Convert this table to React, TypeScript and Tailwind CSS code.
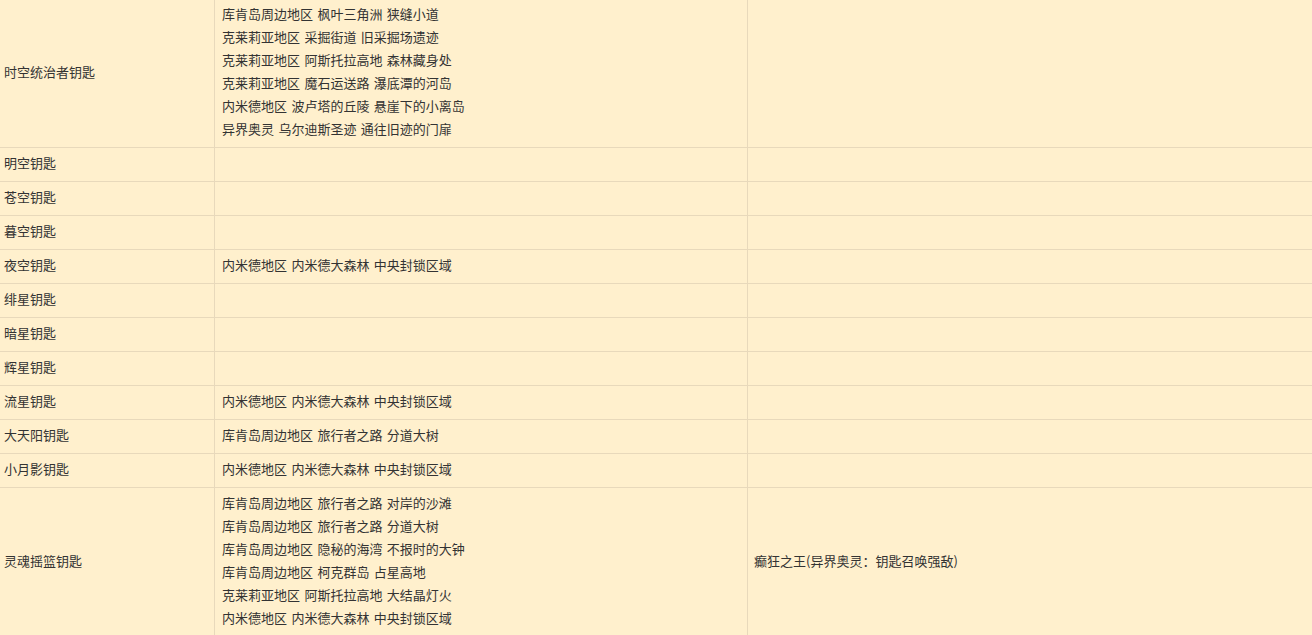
const rows: { name: string; places: string[]; boss?: string }[] = [
  {
    name: "时空统治者钥匙",
    places: [
      "库肯岛周边地区 枫叶三角洲 狭缝小道",
      "克莱莉亚地区 采掘街道 旧采掘场遗迹",
      "克莱莉亚地区 阿斯托拉高地 森林藏身处",
      "克莱莉亚地区 魔石运送路 瀑底潭的河岛",
      "内米德地区 波卢塔的丘陵 悬崖下的小离岛",
      "异界奥灵 乌尔迪斯圣迹 通往旧迹的门扉",
    ],
  },
  { name: "明空钥匙", places: [] },
  { name: "苍空钥匙", places: [] },
  { name: "暮空钥匙", places: [] },
  { name: "夜空钥匙", places: ["内米德地区 内米德大森林 中央封锁区域"] },
  { name: "绯星钥匙", places: [] },
  { name: "暗星钥匙", places: [] },
  { name: "辉星钥匙", places: [] },
  { name: "流星钥匙", places: ["内米德地区 内米德大森林 中央封锁区域"] },
  { name: "大天阳钥匙", places: ["库肯岛周边地区 旅行者之路 分道大树"] },
  { name: "小月影钥匙", places: ["内米德地区 内米德大森林 中央封锁区域"] },
  {
    name: "灵魂摇篮钥匙",
    places: [
      "库肯岛周边地区 旅行者之路 对岸的沙滩",
      "库肯岛周边地区 旅行者之路 分道大树",
      "库肯岛周边地区 隐秘的海湾 不报时的大钟",
      "库肯岛周边地区 柯克群岛 占星高地",
      "克莱莉亚地区 阿斯托拉高地 大结晶灯火",
      "内米德地区 内米德大森林 中央封锁区域",
    ],
    boss: "癫狂之王(异界奥灵：钥匙召唤强敌)",
  },
];

export default function App() {
  return (
    <div
      className="w-[1312px] h-[635px] overflow-hidden bg-[#fff0cd] text-[#333] text-[13px] leading-[23px] [word-spacing:1.5px]"
      style={{ fontFamily: '"Microsoft YaHei", "Noto Sans CJK SC", sans-serif' }}
    >
      <div className="-mt-px">
        {rows.map((r) => (
          <div key={r.name} className="flex border-b border-[#e8d9bb]">
            <div className="w-[215px] shrink-0 border-r border-[#e8d9bb] pl-[4px] pt-[3px] pb-[7px] flex items-center">
              {r.name}
            </div>
            <div className="w-[533px] shrink-0 border-r border-[#e8d9bb] pl-[7px] pt-[3px] pb-[7px] min-h-[33px]">
              {r.places.map((p, i) => (
                <div key={i}>{p}</div>
              ))}
            </div>
            <div className="flex-1 pl-[6px] pt-[3px] pb-[7px] flex items-center">
              {r.boss}
            </div>
          </div>
        ))}
      </div>
    </div>
  );
}
